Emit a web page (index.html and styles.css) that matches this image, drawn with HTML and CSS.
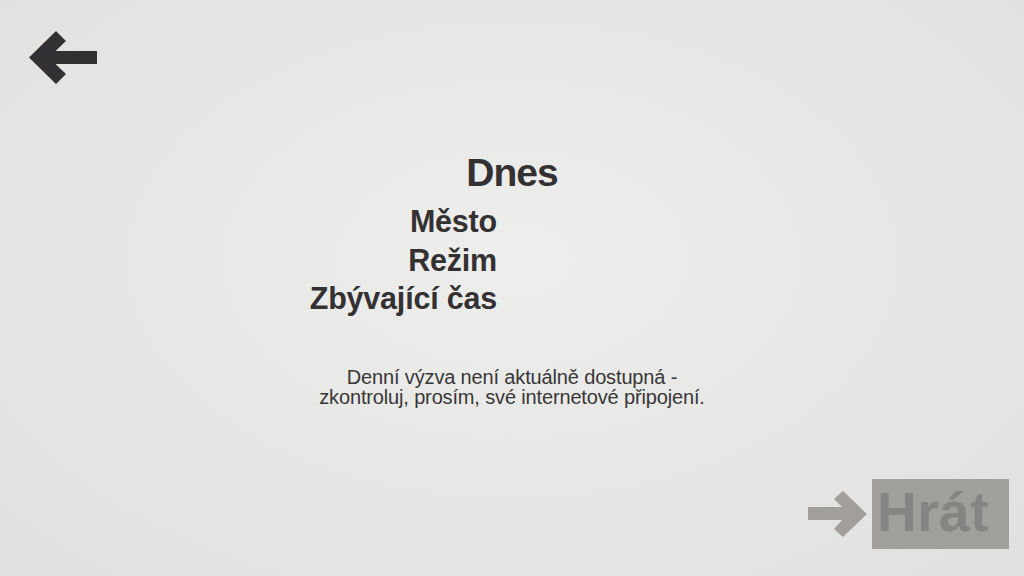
FILE: index.html
```html
<!DOCTYPE html>
<html lang="cs">
<head>
<meta charset="utf-8">
<title>Dnes</title>
<link rel="stylesheet" href="styles.css">
</head>
<body>
<div class="screen">
  <header class="top">
    <svg class="back" width="68" height="54" viewBox="0 0 68 54" aria-label="Zpět">
      <polygon points="0,26.5 27,0 37,10 26.5,20 68,20 68,33 26.5,33 37,43 27,53"/>
    </svg>
  </header>
  <main class="content">
    <h1 class="title">Dnes</h1>
    <div class="info">
      <div class="label">Město</div><div class="value"></div>
      <div class="label">Režim</div><div class="value"></div>
      <div class="label">Zbývající čas</div><div class="value"></div>
    </div>
    <p class="message"><span class="line">Denní výzva není aktuálně dostupná -</span><span class="line">zkontroluj, prosím, své internetové připojení.</span></p>
  </main>
  <footer class="bottom">
    <svg class="fwd" width="59" height="46" viewBox="0 0 59 46">
      <polygon points="0,16 34,16 26,8 35,0 59,23 35,46 26,38 34,29 0,29"/>
    </svg>
    <div class="play">Hrát</div>
  </footer>
</div>
</body>
</html>
```
FILE: styles.css
```css
html, body {
  margin: 0;
  padding: 0;
}
body {
  font-family: "Liberation Sans", Arial, sans-serif;
  background: radial-gradient(ellipse at 50% 45%, #ededec 0%, #e8e8e7 45%, #e0e0df 100%);
  color: #333132;
}
.screen {
  width: 1024px;
  height: 576px;
  display: flex;
  flex-direction: column;
  overflow: hidden;
}
.top {
  padding: 31px 0 0 29px;
}
.back {
  display: block;
  fill: #333033;
}
.content {
  margin-top: 68px;
  display: flex;
  flex-direction: column;
  align-items: stretch;
}
.title {
  margin: 0;
  font-size: 39px;
  line-height: 39px;
  font-weight: bold;
  letter-spacing: -1px;
  text-align: center;
}
.info {
  margin-top: 10px;
  display: grid;
  grid-template-columns: 1fr 1fr;
  column-gap: 30px;
  font-size: 30.5px;
  line-height: 38.5px;
  font-weight: bold;
  letter-spacing: -0.2px;
}
.label {
  text-align: right;
}
.message {
  margin: 49px 0 0;
  font-size: 20px;
  line-height: 20px;
  letter-spacing: -0.15px;
  text-align: center;
  color: #383737;
  display: flex;
  flex-direction: column;
  align-items: center;
}
.line {
  display: block;
}
.bottom {
  margin-top: auto;
  display: flex;
  justify-content: flex-end;
  align-items: center;
  gap: 5px;
  padding: 0 15px 27px 0;
}
.fwd {
  display: block;
  fill: #a19e9b;
}
.play {
  width: 132px;
  height: 66px;
  padding: 0 0 4px 5px;
  background: #a19f9c;
  color: #858482;
  font-size: 55px;
  line-height: 66px;
  font-weight: bold;
  letter-spacing: 0.5px;
}
```
